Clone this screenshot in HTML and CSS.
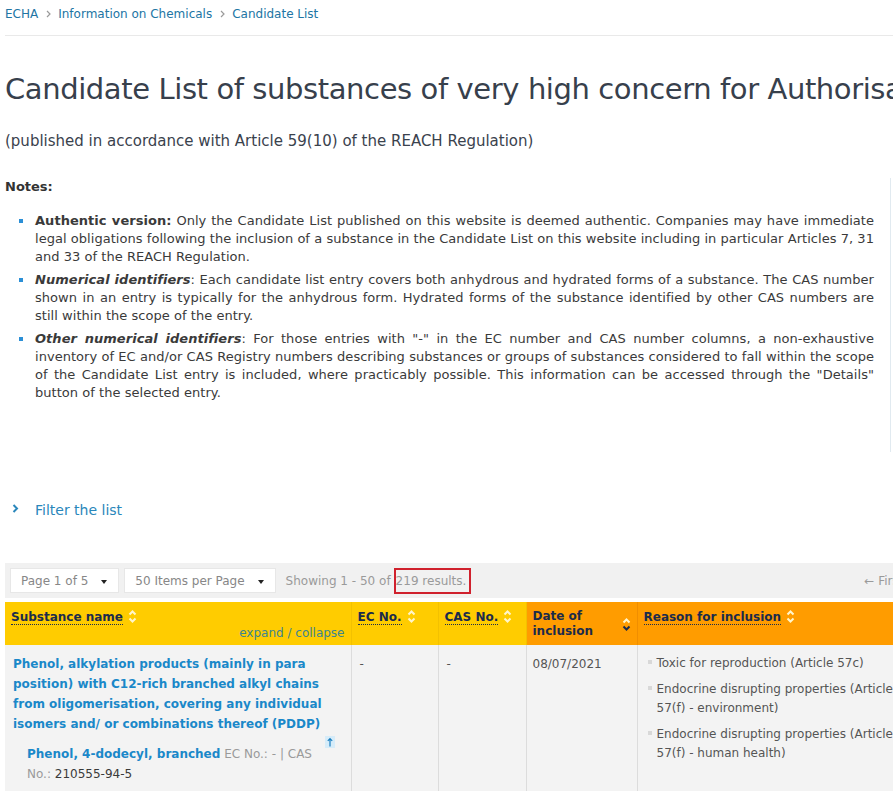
FILE: index.html
```html
<!DOCTYPE html>
<html>
<head>
	<title>Candidate List of substances of very high concern for Authorisation - ECHA</title>
	<meta name="viewport" content="width=device-width, initial-scale=1"><link rel="stylesheet" href="styles.css">
</head>
<body>
<div class="page">
	<nav class="breadcrumb">
		<a href="#">ECHA</a><span class="crumb-sep"><svg width="5" height="8" viewBox="0 0 5 8"><path d="M1 1 4 4 1 7" fill="none" stroke="#9a9a9a" stroke-width="1.2"/></svg></span><a href="#">Information on Chemicals</a><span class="crumb-sep"><svg width="5" height="8" viewBox="0 0 5 8"><path d="M1 1 4 4 1 7" fill="none" stroke="#9a9a9a" stroke-width="1.2"/></svg></span><a href="#">Candidate List</a>
	</nav>

	<h1 class="page-title">Candidate List of substances of very high concern for Authorisation</h1>
	<p class="page-subtitle">(published in accordance with Article 59(10) of the REACH Regulation)</p>

	<div class="notes-box">
		<p class="notes-title">Notes:</p>
		<ul class="notes-list">
			<li><strong>Authentic version:</strong> Only the Candidate List published on this website is deemed authentic. Companies may have immediate legal obligations following the inclusion of a substance in the Candidate List on this website including in particular Articles 7, 31 and 33 of the REACH Regulation.</li>
			<li><strong><em>Numerical identifiers</em></strong>: Each candidate list entry covers both anhydrous and hydrated forms of a substance. The CAS number shown in an entry is typically for the anhydrous form. Hydrated forms of the substance identified by other CAS numbers are still within the scope of the entry.</li>
			<li><strong><em>Other numerical identifiers</em></strong>: For those entries with "-" in the EC number and CAS number columns, a non-exhaustive inventory of EC and/or CAS Registry numbers describing substances or groups of substances considered to fall within the scope of the Candidate List entry is included, where practicably possible. This information can be accessed through the "Details" button of the selected entry.</li>
		</ul>
	</div>

	<a class="filter-toggle" href="#"><svg width="7" height="9" viewBox="0 0 7 9"><path d="M1.5 1 5 4.5 1.5 8" fill="none" stroke="#2a87bb" stroke-width="2"/></svg>Filter the list</a>

	<div class="toolbar">
		<div class="select">Page 1 of 5<span class="caret"></span></div>
		<div class="select">50 Items per Page<span class="caret"></span></div>
		<div class="summary">Showing 1 - 50 of<span class="result-count">219 results.</span></div>
		<div class="pager">&larr; First</div>
	</div>

	<table class="results">
		<colgroup>
			<col class="col-name">
			<col class="col-ec">
			<col class="col-cas">
			<col class="col-date">
			<col class="col-reason">
		</colgroup>
		<thead>
			<tr>
				<th>
					<span class="sort-label">Substance name</span><svg class="sort-icon" width="9" height="15" viewBox="0 0 9 15"><path d="M1.5 5.5 4.5 2.5 7.5 5.5M1.5 9.5 4.5 12.5 7.5 9.5" fill="none" stroke="#fff6cc" stroke-width="2"/></svg>
					<div class="expand-links">expand / collapse</div>
				</th>
				<th><span class="sort-label">EC No.</span><svg class="sort-icon" width="9" height="15" viewBox="0 0 9 15"><path d="M1.5 5.5 4.5 2.5 7.5 5.5M1.5 9.5 4.5 12.5 7.5 9.5" fill="none" stroke="#fff6cc" stroke-width="2"/></svg></th>
				<th><span class="sort-label">CAS No.</span><svg class="sort-icon" width="9" height="15" viewBox="0 0 9 15"><path d="M1.5 5.5 4.5 2.5 7.5 5.5M1.5 9.5 4.5 12.5 7.5 9.5" fill="none" stroke="#fff6cc" stroke-width="2"/></svg></th>
				<th class="sorted">
					<div class="sorted-head">
						<span>Date of inclusion</span>
						<svg width="9" height="15" viewBox="0 0 9 15"><path d="M1.5 5.5 4.5 2.5 7.5 5.5" fill="none" stroke="#fff6cc" stroke-width="2"/><path d="M1.5 9.5 4.5 12.5 7.5 9.5" fill="none" stroke="#1b2b4b" stroke-width="2"/></svg>
					</div>
				</th>
				<th class="sorted"><span class="sort-label">Reason for inclusion</span><svg class="sort-icon" width="9" height="15" viewBox="0 0 9 15"><path d="M1.5 5.5 4.5 2.5 7.5 5.5M1.5 9.5 4.5 12.5 7.5 9.5" fill="none" stroke="#fff6cc" stroke-width="2"/></svg></th>
			</tr>
		</thead>
		<tbody>
			<tr>
				<td>
					<a class="substance-name" href="#">Phenol, alkylation products (mainly in para position) with C12-rich branched alkyl chains from oligomerisation, covering any individual isomers and/ or combinations thereof (PDDP)</a>
					<div class="sub-toggle"><svg width="10" height="12" viewBox="0 0 10 12"><rect width="10" height="12" fill="#d6ecf9"/><path d="M5 10.5V2.5M2.8 4.8 5 2.5 7.2 4.8" fill="none" stroke="#1a7fc0" stroke-width="1.2"/></svg></div>
					<div class="sub-entry"><a class="sub-name" href="#">Phenol, 4-dodecyl, branched</a> <span class="label">EC No.:</span> <span class="label">-</span> <span class="label">| CAS No.:</span> <span class="value">210555-94-5</span></div>
				</td>
				<td>-</td>
				<td>-</td>
				<td class="date-cell">08/07/2021</td>
				<td>
					<ul class="reasons">
						<li>Toxic for reproduction (Article 57c)</li>
						<li>Endocrine disrupting properties (Article 57(f) - environment)</li>
						<li>Endocrine disrupting properties (Article 57(f) - human health)</li>
					</ul>
				</td>
			</tr>
		</tbody>
	</table>
</div>
</body>
</html>
```

FILE: styles.css
```css
html, body{
	margin: 0;
	padding: 0;
}
body{
	width: 893px;
	overflow: hidden;
	font-family: "DejaVu Sans", Verdana, sans-serif;
	color: #333;
	background-color: #fff;
}
a{
	text-decoration: none;
}
.page{
	padding-left: 5px;
}

/* breadcrumb */
.breadcrumb{
	font-size: 12px;
	line-height: 18px;
	padding: 5px 0 12px;
	border-bottom: 1px solid #e9e9e9;
	white-space: nowrap;
}
.breadcrumb a{
	color: #2175a4;
}
.crumb-sep{
	display: inline-block;
	margin: 0 7px 0 8px;
}

/* headings */
.page-title{
	margin: 35px 0 0;
	font-size: 29px;
	font-weight: normal;
	letter-spacing: -0.4px;
	line-height: 36px;
	color: #37404c;
	white-space: nowrap;
}
.page-subtitle{
	margin: 24px 0 0;
	font-size: 15px;
	line-height: 20px;
	color: #3a424d;
}

/* notes */
.notes-box{
	width: 869px;
	margin-top: 27px;
	padding: 0 16px 45px 0;
	border-right: 1px solid #e1eaf0;
}
.notes-title{
	margin: 0;
	font-size: 13px;
	font-weight: bold;
	line-height: 18px;
}
.notes-list{
	list-style: none;
	margin: 16px 0 0;
	padding: 0 0 0 30px;
	font-size: 13px;
	line-height: 18px;
	letter-spacing: 0.0375px;
	text-align: justify;
	color: #3a3a3a;
}
.notes-list li{
	position: relative;
	margin-bottom: 5px;
}
.notes-list li::before{
	content: "";
	position: absolute;
	left: -16px;
	top: 7px;
	width: 4px;
	height: 4px;
	background-color: #2b8fd6;
}

/* filter */
.filter-toggle{
	display: flex;
	align-items: center;
	margin-top: 48px;
	font-size: 14px;
	line-height: 20px;
	color: #2a87bb;
}
.filter-toggle svg{
	margin: -3px 16px 0 7px;
}

/* toolbar */
.toolbar{
	display: flex;
	align-items: center;
	width: 1200px;
	height: 35px;
	margin-top: 43px;
	padding: 0 5px;
	box-sizing: border-box;
	background-color: #f1f1f1;
	font-size: 12px;
	color: #9a9a9a;
}
.select{
	display: flex;
	align-items: center;
	height: 25px;
	box-sizing: border-box;
	margin-right: 5px;
	padding: 0 11px 0 10px;
	background-color: #fff;
	border: 1px solid #e7e7e7;
	color: #878787;
}
.caret{
	width: 0;
	height: 0;
	margin: 2px 0 0 13px;
	border-left: 3.5px solid transparent;
	border-right: 3.5px solid transparent;
	border-top: 4px solid #222;
}
.summary{
	display: flex;
	align-items: center;
	margin-left: 5px;
}
.result-count{
	margin-left: 3px;
	padding: 4px 3px 4px 0;
	line-height: 14px;
	border: 2px solid #d0212d;
}
.pager{
	margin-left: 393px;
}

/* table */
.results{
	margin-top: 4px;
	border-collapse: collapse;
	table-layout: fixed;
	width: 912px;
	font-size: 12px;
}
.col-name{ width: 346px; }
.col-ec{ width: 87px; }
.col-cas{ width: 88px; }
.col-date{ width: 111px; }
.col-reason{ width: 280px; }

.results thead tr{
	height: 43px;
}
.results th{
	padding: 7px 6px 0;
	vertical-align: top;
	text-align: left;
	font-weight: bold;
	line-height: 16px;
	color: #1b2b4b;
	background-color: #ffcc00;
}
.results th + th{
	border-left: 1px solid #f3c100;
}
.results th.sorted{
	background-color: #ff9c00;
}
.results th.sorted + th.sorted{
	border-left-color: #f08e00;
}
.sort-label{
	border-bottom: 1px dotted #1b2b4b;
}
.sort-icon{
	margin-left: 5px;
	vertical-align: -3px;
}
.expand-links{
	text-align: right;
	font-weight: normal;
	color: #3d8590;
}
.sorted-head{
	display: flex;
	justify-content: space-between;
	align-items: flex-start;
	line-height: 15px;
}
.sorted-head svg{
	flex-shrink: 0;
	margin-top: 8px;
}

.results td{
	padding: 9px 8px 12px;
	vertical-align: top;
	line-height: 20px;
	color: #555;
	background-color: #f3f3f3;
	border-left: 1px solid #dcdcdc;
}
.results td:first-child{
	border-left: none;
}
.date-cell{
	padding-left: 6px !important;
}
.substance-name{
	font-weight: bold;
	color: #1a88c9;
}
.sub-toggle{
	height: 10px;
	text-align: right;
}
.sub-toggle svg{
	margin-right: 8px;
}
.sub-entry{
	padding: 0 16px 0 14px;
}
.sub-name{
	font-weight: bold;
	color: #1a88c9;
}
.label{
	color: #9a9a9a;
}
.value{
	color: #3a3a3a;
}
.reasons{
	list-style: none;
	margin: 0;
	padding: 0 0 0 11px;
	line-height: 19px;
}
.reasons li{
	position: relative;
	margin-bottom: 7px;
}
.reasons li::before{
	content: "";
	position: absolute;
	left: -9px;
	top: 6px;
	width: 4px;
	height: 4px;
	background-color: #d8d8d8;
}
```
